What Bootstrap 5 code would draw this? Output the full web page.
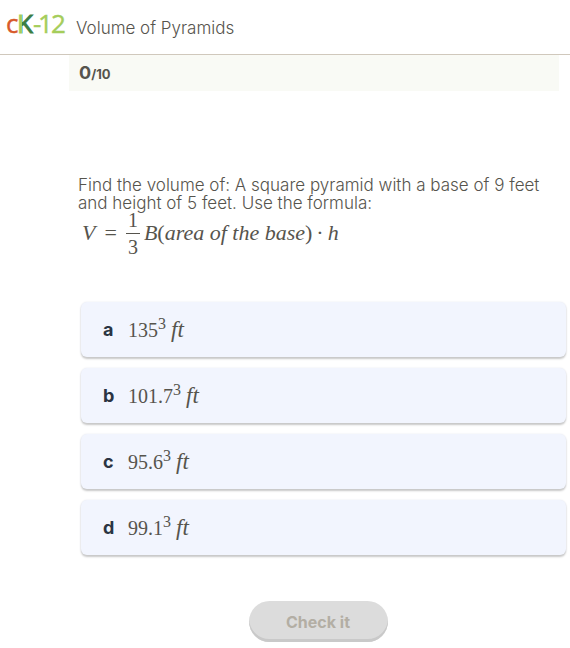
<!DOCTYPE html>
<html lang="en">
<head>
<meta charset="utf-8">
<meta name="viewport" content="width=device-width, initial-scale=1">
<title>Volume of Pyramids</title>
<link href="https://cdn.jsdelivr.net/npm/bootstrap@5.3.0/dist/css/bootstrap.min.css" rel="stylesheet">
<style>
body{font-family:Inter,"Open Sans",sans-serif;color:#56544d;background:#fff}
.topbar{height:55px;border-bottom:1px solid #d0c8bc;padding:0 6px}
.brand-logo{display:block;width:62px;height:46px}
.lesson{font-size:17px;line-height:20px;margin:18px 0 0 8px;font-weight:300}
.score{background:#f9faf5;height:36px;margin:0 11px 0 69px;padding:0 10px;line-height:36px;font-size:18px;font-weight:700}
.score span{font-size:13px}
.quiz{padding:85px 4px 0 78px}
.question{font-weight:300;font-size:17px;line-height:18px}
.math{font-family:"Liberation Serif",serif;font-size:20px;line-height:24px;white-space:nowrap}
.formula{height:42px;padding-left:4px;font-size:22px;font-style:italic}
.equals{margin:0 9px}
.fraction{width:14px;font-size:20px;font-style:normal;text-align:center}
.fraction span{display:block;line-height:26px}
.fraction span:first-child{border-bottom:1px solid #56544d}
.upright{font-style:normal}
.answers{gap:11px;padding:48px 0 0 3px}
.answer{height:55px;border:0;border-radius:6px;background:#f2f5fe;box-shadow:0 2px 2px #c8c8c8,0 0 2px #e4e6ee;padding:0 22px;color:#56544d;text-align:left}
.answer b{width:25px;font-size:18px;color:#2b3442;line-height:24px}
.answer sup{font-size:16px;top:-8px;line-height:0;vertical-align:baseline}
.answer i{font-size:23px}
.check{width:139px;height:41px;border:0;border-radius:21px;background:#dcdcdc;box-shadow:inset 0 -3px 0 #c9c9c9;color:#b3aea4;font-size:16px;font-weight:700;margin:46px 0 6px;padding:0}
.check-row{padding:0 6px 0 72px}
</style>
</head>
<body>
<header class="topbar d-flex align-items-start">
  <a href="#" aria-label="CK-12 home">
    <svg class="brand-logo" viewBox="0 0 62 46" font-family="Open Sans, sans-serif" font-size="26">
      <defs><linearGradient id="kColor" gradientUnits="userSpaceOnUse" x1="10" y1="0" x2="30" y2="0"><stop offset=".31" stop-color="#a5cd5b"/><stop offset=".31" stop-color="#397d43"/></linearGradient></defs>
      <text x="0" y="33" fill="#d85a2b" stroke="#d85a2b" stroke-width=".4">c</text>
      <text x="11" y="33" fill="url(#kColor)" stroke="url(#kColor)" stroke-width="1">K</text>
      <text x="27 32 45" y="33" fill="#a5cd5b" stroke="#a5cd5b" stroke-width=".4">-12</text>
    </svg>
  </a>
  <h1 class="lesson">Volume of Pyramids</h1>
</header>
<main>
  <div class="score">0<span>/10</span></div>
  <section class="quiz">
    <p class="question mb-0">Find the volume of: A square pyramid with a base of 9 feet and height of 5 feet. Use the formula:</p>
    <div class="math formula d-flex align-items-center">
      <span>V</span><span class="upright equals">=</span>
      <span class="fraction"><span>1</span><span>3</span></span>
      <span class="ms-1">B<span class="upright">(</span>area of the base<span class="upright">)</span></span><span class="upright mx-1">·</span><span>h</span>
    </div>
    <div class="answers d-flex flex-column">
      <button type="button" class="answer d-flex align-items-center"><b>a</b><span class="math">135<sup>3</sup> <i>ft</i></span></button>
      <button type="button" class="answer d-flex align-items-center"><b>b</b><span class="math">101.7<sup>3</sup> <i>ft</i></span></button>
      <button type="button" class="answer d-flex align-items-center"><b>c</b><span class="math">95.6<sup>3</sup> <i>ft</i></span></button>
      <button type="button" class="answer d-flex align-items-center"><b>d</b><span class="math">99.1<sup>3</sup> <i>ft</i></span></button>
    </div>
  </section>
  <div class="check-row text-center"><button type="button" class="check" disabled>Check it</button></div>
</main>
<script src="https://cdn.jsdelivr.net/npm/bootstrap@5.3.0/dist/js/bootstrap.bundle.min.js"></script>
</body>
</html>
